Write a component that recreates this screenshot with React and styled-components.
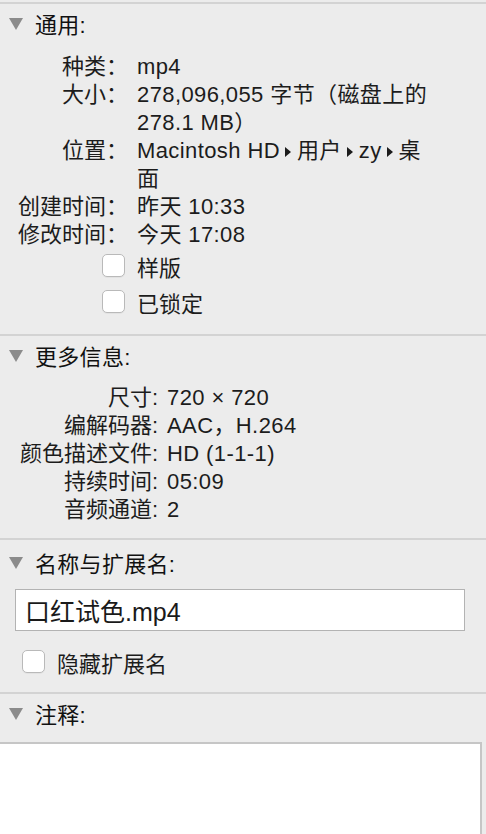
import React from "react";
import styled, { createGlobalStyle } from "styled-components";

const GlobalStyle = createGlobalStyle`
  html, body {
    margin: 0;
    padding: 0;
    background: #ececec;
    overflow: hidden;
  }
  body {
    font-family: "Liberation Sans", "Noto Sans CJK SC", sans-serif;
    color: #1c1c1c;
  }
`;

const Panel = styled.div`
  width: 486px;
  height: 834px;
  padding-top: 2px;
  box-sizing: border-box;
  overflow: hidden;
`;

const Section = styled.section`
  border-top: 2px solid #d3d3d3;
  padding-bottom: ${(p) => p.$bottom || 0}px;
`;

const Header = styled.div`
  display: flex;
  align-items: center;
  height: ${(p) => p.$height || 38}px;
  padding-left: 9px;
  font-size: 22px;
  letter-spacing: 0.3px;
  color: #111;
`;

const Disclosure = styled.svg`
  width: 14px;
  height: 12px;
  margin-right: 12px;
  margin-top: 2px;
  flex: none;
`;

const InfoGrid = styled.div`
  display: grid;
  grid-template-columns: ${(p) => p.$label}px 1fr;
  column-gap: 9px;
  margin-top: ${(p) => p.$top || 0}px;
  font-size: 22px;
  line-height: 28px;
`;

const Label = styled.div`
  text-align: right;
  white-space: nowrap;
`;

const Value = styled.div`
  white-space: nowrap;
  letter-spacing: 0.4px;
`;

const Crumb = styled.span`
  display: inline-block;
  width: 0;
  height: 0;
  margin: 0 6px 1px 5px;
  border-top: 5px solid transparent;
  border-bottom: 5px solid transparent;
  border-left: 6px solid #1c1c1c;
  vertical-align: middle;
`;

const CheckRow = styled.label`
  display: flex;
  align-items: center;
  gap: 12px;
  height: 23px;
  padding-left: ${(p) => p.$indent}px;
  margin-top: ${(p) => p.$top || 0}px;
  font-size: 22px;
`;

const Box = styled.span`
  width: 23px;
  height: 23px;
  box-sizing: border-box;
  border: 1px solid #b9b9b9;
  border-radius: 5px;
  background: #fff;
  box-shadow: 0 1px 0 rgba(0, 0, 0, 0.04);
  flex: none;
`;

const NameInput = styled.div`
  margin: 5px 0 0 15px;
  width: 450px;
  height: 42px;
  box-sizing: border-box;
  border: 1px solid #b3b3b3;
  background: #fff;
  padding-left: 9px;
  display: flex;
  align-items: center;
  font-size: 25px;
  color: #1a1a1a;
`;

const CommentBox = styled.div`
  margin: 10px 0 0 -2px;
  width: 484px;
  height: 100px;
  box-sizing: border-box;
  border: 2px solid #c6c6c6;
  background: #fff;
`;

function SectionHeader({ title, height }) {
  return (
    <Header $height={height}>
      <Disclosure viewBox="0 0 14 12">
        <polygon points="0,0 14,0 7,12" fill="#8b8b8b" />
      </Disclosure>
      {title}
    </Header>
  );
}

function Check({ label, indent, top }) {
  return (
    <CheckRow $indent={indent} $top={top}>
      <Box />
      {label}
    </CheckRow>
  );
}

const general = [
  ["种类：", ["mp4"]],
  ["大小：", ["278,096,055 字节（磁盘上的", "278.1 MB）"]],
  [
    "位置：",
    [
      <>
        Macintosh HD<Crumb />用户<Crumb />zy<Crumb />桌
      </>,
      "面",
    ],
  ],
  ["创建时间：", ["昨天 10:33"]],
  ["修改时间：", ["今天 17:08"]],
];

const more = [
  ["尺寸:", "720 × 720"],
  ["编解码器:", "AAC，H.264"],
  ["颜色描述文件:", "HD (1-1-1)"],
  ["持续时间:", "05:09"],
  ["音频通道:", "2"],
];

export default function App() {
  return (
    <>
      <GlobalStyle />
      <Panel>
        <Section $bottom={21}>
          <SectionHeader title="通用:" />
          <InfoGrid $label={128} $top={11}>
            {general.map(([label, lines]) => (
              <React.Fragment key={label}>
                <Label>{label}</Label>
                <Value>
                  {lines.map((line, i) => (
                    <div key={i}>{line}</div>
                  ))}
                </Value>
              </React.Fragment>
            ))}
          </InfoGrid>
          <Check label="样版" indent={102} top={5} />
          <Check label="已锁定" indent={102} top={13} />
        </Section>

        <Section $bottom={14}>
          <SectionHeader title="更多信息:" />
          <InfoGrid $label={158} $top={10}>
            {more.map(([label, value]) => (
              <React.Fragment key={label}>
                <Label>{label}</Label>
                <Value>{value}</Value>
              </React.Fragment>
            ))}
          </InfoGrid>
        </Section>

        <Section $bottom={19}>
          <SectionHeader title="名称与扩展名:" height={44} />
          <NameInput>口红试色.mp4</NameInput>
          <Check label="隐藏扩展名" indent={22} top={19} />
        </Section>

        <Section>
          <SectionHeader title="注释:" />
          <CommentBox />
        </Section>
      </Panel>
    </>
  );
}
